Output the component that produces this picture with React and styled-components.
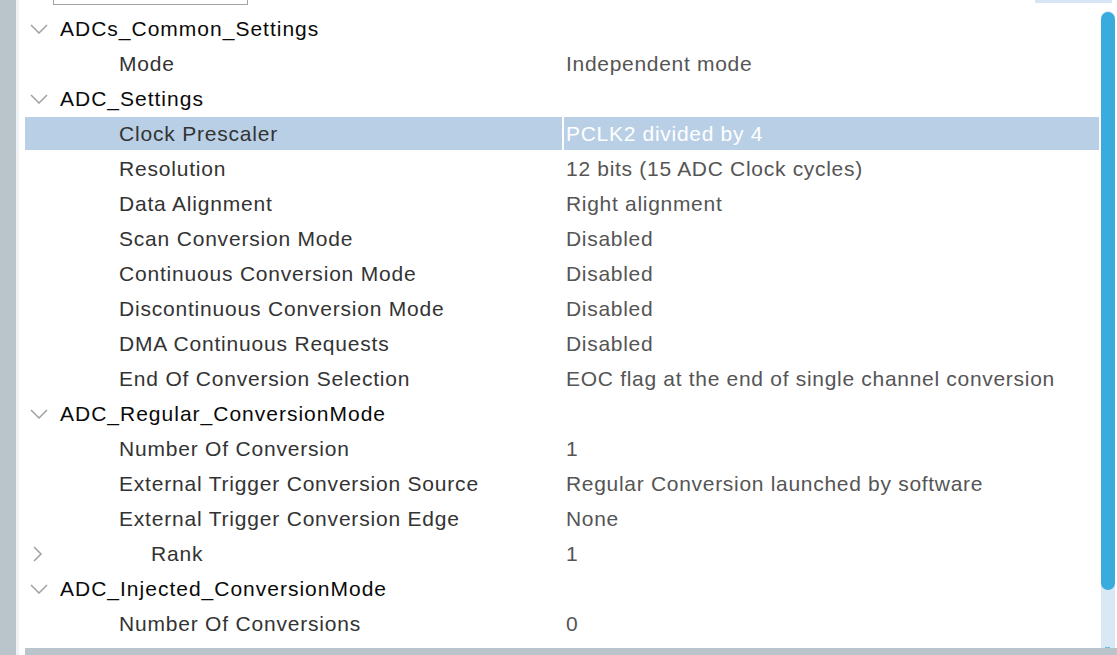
import React from "react";
import styled, { createGlobalStyle } from "styled-components";

const Global = createGlobalStyle`
  html, body { margin: 0; padding: 0; background: #ffffff; }
  body { width: 1117px; height: 655px; overflow: hidden; font-family: "Liberation Sans", Arial, sans-serif; }
`;

const Page = styled.div`
  display: flex;
  width: 1117px;
  height: 655px;
  background: #ffffff;
`;

const SideBar = styled.div`
  width: 16px;
  flex: none;
  background: #b9c4cb;
`;

const SideEdge = styled.div`
  width: 3px;
  flex: none;
  background: #eef2f5;
`;

const Main = styled.div`
  flex: 1;
  display: flex;
  flex-direction: column;
  min-width: 0;
`;

const TopStrip = styled.div`
  height: 11px;
  flex: none;
  display: flex;
  align-items: flex-start;
`;

const SearchBox = styled.div`
  margin-left: 34px;
  width: 193px;
  height: 4px;
  border: 1px solid #a3a3a3;
  border-top: none;
`;

const TopButton = styled.div`
  margin-left: auto;
  margin-right: 5px;
  width: 77px;
  height: 3px;
  background: #d6e6f5;
`;

const Body = styled.div`
  flex: 1;
  display: flex;
  min-height: 0;
  padding-left: 6px;
`;

const Tree = styled.div`
  width: 1074px;
  flex: none;
  display: flex;
  flex-direction: column;
`;

const Row = styled.div`
  display: grid;
  grid-template-columns: 537px 535px;
  column-gap: 2px;
  height: 33px;
  margin: 1px 0;
`;

const LabelCell = styled.div`
  display: flex;
  align-items: center;
  padding-left: ${(p) => p.$indent}px;
  background: ${(p) => (p.$selected ? "#b8cfe6" : "transparent")};
  font-size: 21px;
  letter-spacing: ${(p) => (p.$group ? "1px" : "0.8px")};
  color: ${(p) => (p.$group ? "#0a0a0a" : "#333333")};
  white-space: nowrap;
  position: relative;
`;

const ValueCell = styled.div`
  display: flex;
  align-items: center;
  padding-left: 2px;
  background: ${(p) => (p.$selected ? "#b8cfe6" : "transparent")};
  font-size: 21px;
  letter-spacing: 0.7px;
  color: ${(p) => (p.$selected ? "#ffffff" : "#555555")};
  white-space: nowrap;
`;

const Toggle = styled.span`
  position: absolute;
  left: ${(p) => p.$left}px;
  top: 50%;
  transform: translateY(-50%);
  display: flex;
`;

const ScrollTrack = styled.div`
  margin-left: 2px;
  width: 14px;
  flex: none;
  background: #d9e8f5;
  position: relative;
  border-radius: 7px 7px 0 0;
`;

const ScrollThumb = styled.div`
  position: absolute;
  left: 0;
  right: 0;
  top: 1px;
  height: 578px;
  background: #3aabdd;
  border-radius: 7px;
`;

const ScrollEnd = styled.div`
  position: absolute;
  left: 4px;
  width: 5px;
  bottom: 0;
  height: 1px;
  background: #6dbbe6;
`;

const BottomRow = styled.div`
  height: 7px;
  flex: none;
  display: flex;
`;

const BottomBar = styled.div`
  margin-left: 6px;
  flex: 1;
  background: #bac4cb;
`;

const Down = () => (
  <svg width="18" height="10" viewBox="0 0 18 10">
    <path d="M1 1 L9 9 L17 1" fill="none" stroke="#a0a0a0" strokeWidth="1.5" />
  </svg>
);

const Right = () => (
  <svg width="10" height="16" viewBox="0 0 10 16">
    <path d="M1 1 L8 8 L1 15" fill="none" stroke="#a0a0a0" strokeWidth="1.5" />
  </svg>
);

const rows = [
  { label: "ADCs_Common_Settings", group: true, open: true },
  { label: "Mode", value: "Independent mode" },
  { label: "ADC_Settings", group: true, open: true },
  { label: "Clock Prescaler", value: "PCLK2 divided by 4", selected: true },
  { label: "Resolution", value: "12 bits (15 ADC Clock cycles)" },
  { label: "Data Alignment", value: "Right alignment" },
  { label: "Scan Conversion Mode", value: "Disabled" },
  { label: "Continuous Conversion Mode", value: "Disabled" },
  { label: "Discontinuous Conversion Mode", value: "Disabled" },
  { label: "DMA Continuous Requests", value: "Disabled" },
  { label: "End Of Conversion Selection", value: "EOC flag at the end of single channel conversion" },
  { label: "ADC_Regular_ConversionMode", group: true, open: true },
  { label: "Number Of Conversion", value: "1" },
  { label: "External Trigger Conversion Source", value: "Regular Conversion launched by software" },
  { label: "External Trigger Conversion Edge", value: "None" },
  { label: "Rank", value: "1", sub: true },
  { label: "ADC_Injected_ConversionMode", group: true, open: true },
  { label: "Number Of Conversions", value: "0" },
];

export default function App() {
  return (
    <>
      <Global />
      <Page>
        <SideBar />
        <SideEdge />
        <Main>
          <TopStrip>
            <SearchBox />
            <TopButton />
          </TopStrip>
          <Body>
            <Tree>
              {rows.map((r, i) => {
                const indent = r.group ? 35 : r.sub ? 126 : 94;
                return (
                  <Row key={i}>
                    <LabelCell $indent={indent} $group={r.group} $selected={r.selected}>
                      {r.group && (
                        <Toggle $left={5}>
                          <Down />
                        </Toggle>
                      )}
                      {r.sub && (
                        <Toggle $left={8}>
                          <Right />
                        </Toggle>
                      )}
                      {r.label}
                    </LabelCell>
                    <ValueCell $selected={r.selected}>{r.value || ""}</ValueCell>
                  </Row>
                );
              })}
            </Tree>
            <ScrollTrack>
              <ScrollThumb />
              <ScrollEnd />
            </ScrollTrack>
          </Body>
          <BottomRow>
            <BottomBar />
          </BottomRow>
        </Main>
      </Page>
    </>
  );
}
